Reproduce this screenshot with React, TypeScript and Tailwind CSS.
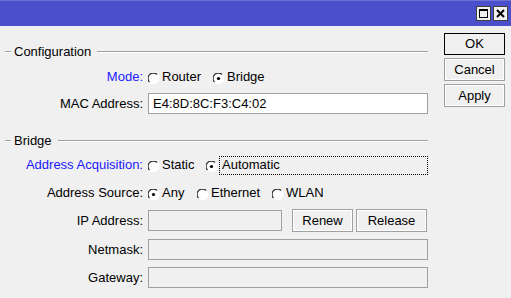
import React from "react";

function Radio({ checked }: { checked?: boolean }) {
  return (
    <svg width="11" height="11" viewBox="0 0 11 11" className="shrink-0 mt-[2px]">
      <circle cx="5.5" cy="5.5" r="5" fill="#ffffff" />
      <path d="M1.6 9.2 A5 5 0 0 1 9.2 1.6" fill="none" stroke="#303030" strokeWidth="1.2" />
      <path d="M9.2 1.6 A5 5 0 0 1 1.6 9.2" fill="none" stroke="#ffffff" strokeWidth="1.2" />
      {checked && <circle cx="5.5" cy="5.5" r="1.6" fill="#000000" />}
    </svg>
  );
}

function Option({ label, checked, w }: { label: string; checked?: boolean; w?: string }) {
  return (
    <div className={`flex items-center gap-[3px] ${w ?? ""}`}>
      <Radio checked={checked} />
      <span>{label}</span>
    </div>
  );
}

function GroupHeader({ title }: { title: string }) {
  return (
    <div className="flex items-center h-[16px]">
      <div className="w-[6px] h-[2px] border-t border-[#a0a0a0] border-b-white border-b" />
      <span className="ml-[3px] mr-[6px]">{title}</span>
      <div className="flex-1 h-[2px] border-t border-[#a0a0a0] border-b-white border-b" />
    </div>
  );
}

function Row({ label, blue, className, children }: { label: string; blue?: boolean; className?: string; children: React.ReactNode }) {
  return (
    <div className={`flex items-center ${className ?? ""}`}>
      <div className={`w-[138px] text-right pr-[0px] ${blue ? "text-[#1a1aff]" : "text-black"}`}>{label}</div>
      <div className="ml-[5px] flex-1 flex items-center">{children}</div>
    </div>
  );
}

function Btn({ label, primary, className }: { label: string; primary?: boolean; className?: string }) {
  return (
    <div
      className={`flex items-center justify-center bg-[#f0f0f0] border ${
        primary ? "border-black" : "border-[#a0a0a0] shadow-[inset_0_0_0_1px_#ffffff]"
      } ${className ?? ""}`}
    >
      {label}
    </div>
  );
}

export default function App() {
  return (
    <div
      className="w-[511px] h-[298px] bg-[#f0f0f0] flex flex-col text-[13px] text-black overflow-hidden"
      style={{ fontFamily: '"Liberation Sans", Arial, sans-serif' }}
    >
      <div className="h-[26px] bg-[#4a4fcb] border-t border-[#6e72d8] flex items-center justify-end pr-[3px] gap-[2px] shrink-0">
        <div className="w-[15px] h-[15px] bg-[#f0f0f0] border border-[#404040] flex items-center justify-center">
          <div className="w-[9px] h-[9px] border border-black border-t-2" />
        </div>
        <div className="w-[15px] h-[15px] bg-[#f0f0f0] border border-[#404040] flex items-center justify-center">
          <svg width="9" height="9" viewBox="0 0 9 9">
            <path d="M1 1 L8 8 M8 1 L1 8" stroke="#000" strokeWidth="2" />
          </svg>
        </div>
      </div>

      <div className="flex flex-1">
        <div className="w-[428px] pl-[5px] flex flex-col">
          <div className="mt-[18px]">
            <GroupHeader title="Configuration" />
          </div>
          <Row label="Mode:" blue className="mt-[7px] h-[20px]">
            <Option label="Router" w="w-[65px]" />
            <Option label="Bridge" checked />
          </Row>
          <Row label="MAC Address:" className="mt-[6px] h-[21px]">
            <div className="flex-1 h-[21px] bg-white border border-[#a0a0a0] flex items-center pl-[4px]">E4:8D:8C:F3:C4:02</div>
          </Row>

          <div className="mt-[19px]">
            <GroupHeader title="Bridge" />
          </div>
          <Row label="Address Acquisition:" blue className="mt-[6px] h-[20px]">
            <Option label="Static" w="w-[58px]" />
            <Radio checked />
            <div className="ml-[2px] flex-1 h-[19px] border border-dotted border-black flex items-center pl-[2px]">Automatic</div>
          </Row>
          <Row label="Address Source:" className="mt-[8px] h-[20px]">
            <Option label="Any" checked w="w-[49px]" />
            <Option label="Ethernet" w="w-[75px]" />
            <Option label="WLAN" />
          </Row>
          <Row label="IP Address:" className="mt-[6px] h-[23px]">
            <div className="w-[134px] h-[21px] border border-[#a0a0a0]" />
            <Btn label="Renew" className="ml-[10px] w-[61px] h-[23px]" />
            <Btn label="Release" className="ml-[3px] w-[71px] h-[23px]" />
          </Row>
          <Row label="Netmask:" className="mt-[7px] h-[21px]">
            <div className="flex-1 h-[21px] border border-[#a0a0a0]" />
          </Row>
          <Row label="Gateway:" className="mt-[7px] h-[21px]">
            <div className="flex-1 h-[21px] border border-[#a0a0a0]" />
          </Row>
        </div>

        <div className="ml-[16px] w-[61px] pt-[7px] flex flex-col gap-[3px]">
          <Btn label="OK" primary className="h-[22px]" />
          <Btn label="Cancel" className="h-[23px]" />
          <Btn label="Apply" className="h-[23px]" />
        </div>
      </div>
    </div>
  );
}
